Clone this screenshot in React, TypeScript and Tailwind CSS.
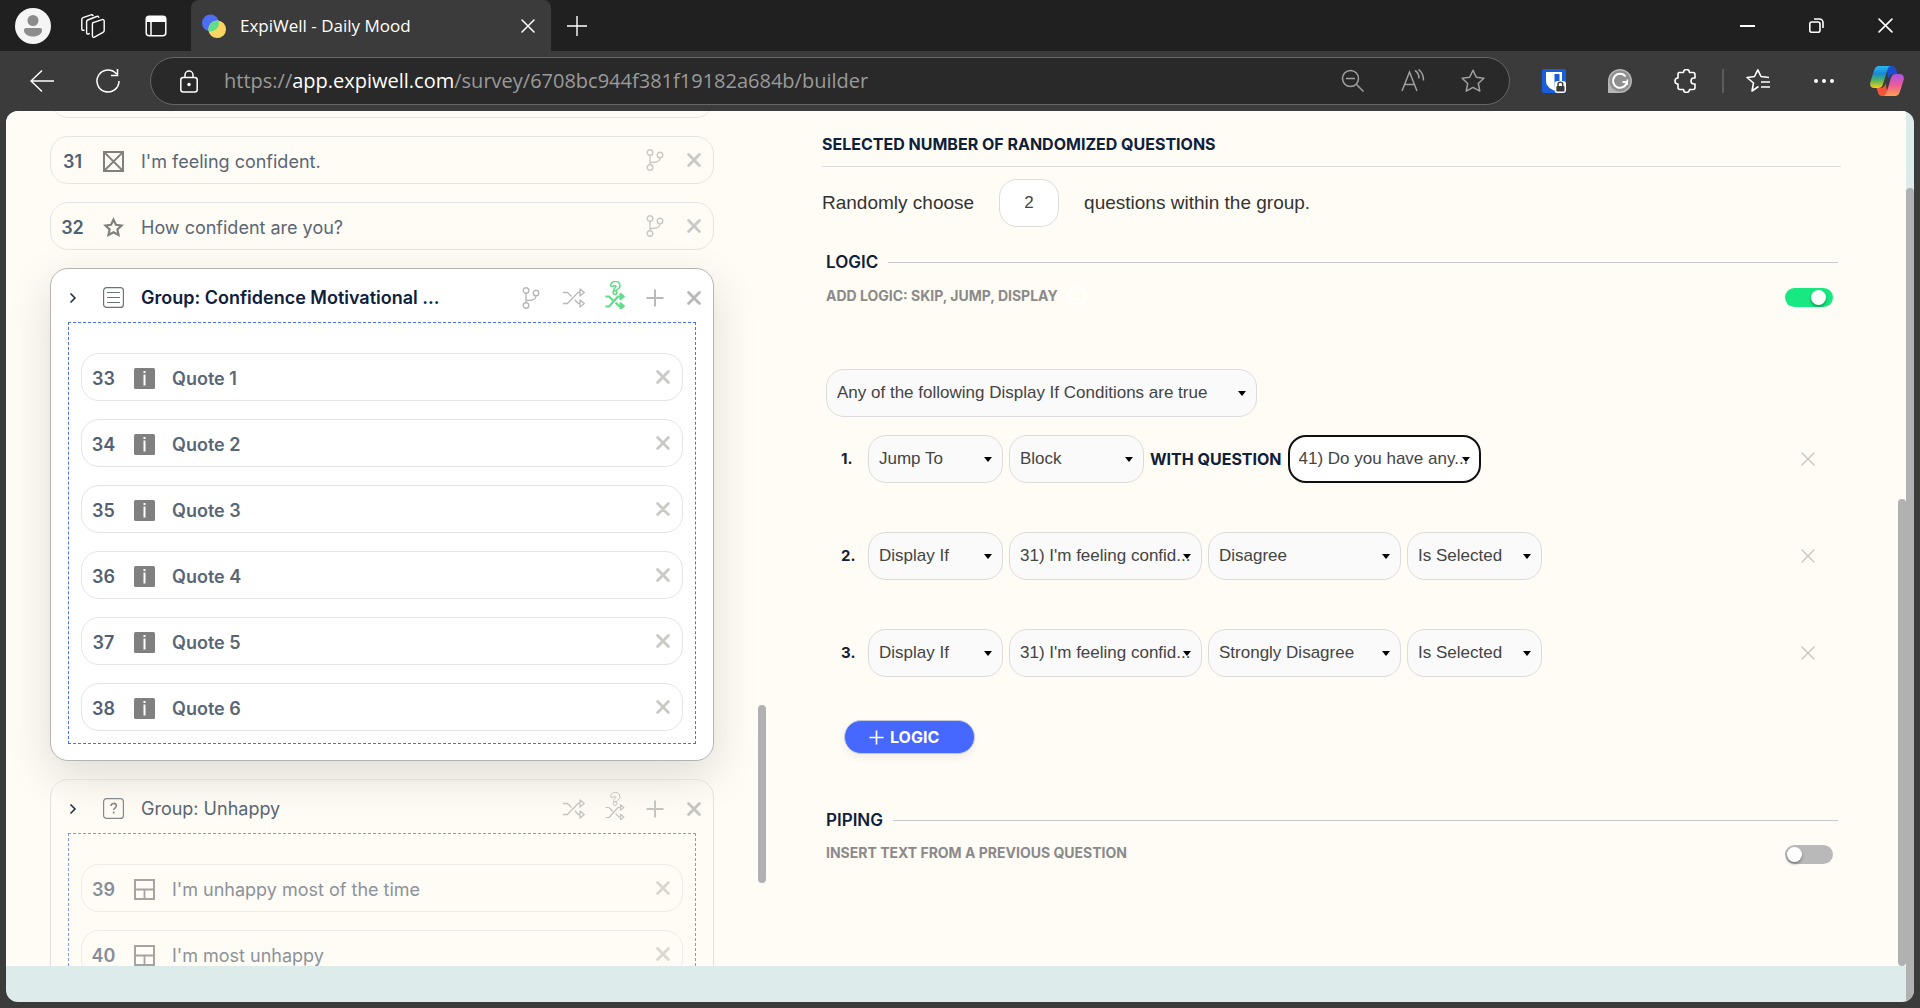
import React, { useState } from 'react';

interface IconProps {
    className?: string;
}

interface Question {
    id: number;
    title: string;
}

interface Condition {
    action: string;
    target: string;
    join?: string;
    answer?: string;
    state?: string;
}

const quotes: Question[] = [
    { id: 33, title: 'Quote 1' },
    { id: 34, title: 'Quote 2' },
    { id: 35, title: 'Quote 3' },
    { id: 36, title: 'Quote 4' },
    { id: 37, title: 'Quote 5' },
    { id: 38, title: 'Quote 6' },
];

const unhappyQuestions: Question[] = [
    { id: 39, title: "I'm unhappy most of the time" },
    { id: 40, title: "I'm most unhappy" },
];

const conditions: Condition[] = [
    { action: 'Jump To', target: 'Block', join: 'WITH QUESTION', answer: '41) Do you have any...' },
    { action: 'Display If', target: "31) I'm feeling confid...", answer: 'Disagree', state: 'Is Selected' },
    { action: 'Display If', target: "31) I'm feeling confid...", answer: 'Strongly Disagree', state: 'Is Selected' },
];

// --- Browser icons ---
const WorkspacesIcon = () => (
    <svg className="w-6 h-6" viewBox="0 0 24 24" fill="none" stroke="#fff" strokeWidth="1.4" strokeLinejoin="round" strokeLinecap="round">
        <path d="M11.5 8.8 21 5.6a1.6 1.6 0 0 1 2.2 1.5v9.4a2 2 0 0 1-1.2 1.8l-8.6 4.9a1.3 1.3 0 0 1-2-1.1V10a1.6 1.6 0 0 1 1-1.5" />
        <path d="M8.2 19.6 7.3 20a1.2 1.2 0 0 1-1.7-1.1V7.6A2 2 0 0 1 6.8 6l8.8-3.5a1.7 1.7 0 0 1 2.2.8" />
        <path d="M3 16.2 2 16.3A1.2 1.2 0 0 1 .8 15V5.4a2 2 0 0 1 1.2-1.8L10 .9a1.6 1.6 0 0 1 2 .6" />
    </svg>
);

const TabActionsIcon = () => (
    <svg className="w-[22px] h-[22px]" viewBox="0 0 22 22" fill="none">
        <rect x="1.2" y="1.2" width="19.6" height="19.6" rx="3" stroke="#fff" strokeWidth="1.5" />
        <path d="M1 4a3 3 0 0 1 3-3h14a3 3 0 0 1 3 3v3H1z" fill="#fff" />
        <path d="M6 7v13.5" stroke="#fff" strokeWidth="1.5" />
    </svg>
);

const Favicon = () => (
    <svg className="w-6 h-6" viewBox="0 0 24 24">
        <defs>
            <clipPath id="fav-blue"><circle cx="8.5" cy="9" r="8.5" /></clipPath>
        </defs>
        <circle cx="8.5" cy="9" r="8.5" fill="#4c6ef5" />
        <circle cx="15.2" cy="15.2" r="8.8" fill="#fcd462" />
        <circle cx="15.2" cy="15.2" r="8.8" fill="#62dc88" clipPath="url(#fav-blue)" />
    </svg>
);

const ThinX = ({ className }: IconProps) => (
    <svg className={className} viewBox="0 0 14 14" fill="none" stroke="currentColor" strokeWidth="1.5" strokeLinecap="round">
        <path d="m1 1 12 12M13 1 1 13" />
    </svg>
);

const BoldX = ({ className }: IconProps) => (
    <svg className={className} viewBox="0 0 14 14" fill="none" stroke="currentColor" strokeWidth="2.8" strokeLinecap="round">
        <path d="m1.6 1.6 10.8 10.8M12.4 1.6 1.6 12.4" />
    </svg>
);

const PlusIcon = ({ className }: IconProps) => (
    <svg className={className} viewBox="0 0 18 18" fill="none" stroke="currentColor" strokeWidth="2">
        <path d="M9 .5v17M.5 9h17" />
    </svg>
);

const BitwardenIcon = () => (
    <svg className="w-6 h-6" viewBox="0 0 24 24">
        <rect width="24" height="24" rx="2" fill="#175ddc" />
        <path d="M4 3h16v9c0 5-4.5 8-8 9.5C8.5 20 4 17 4 12z" fill="#fff" />
        <path d="M12.5 5h5v7c0 2.5-2.5 5-5 6.5z" fill="#175ddc" />
        <rect x="12.5" y="12" width="11.5" height="12" rx="3" fill="#fff" />
        <path d="M16 17v-1.5a2.4 2.4 0 0 1 4.8 0V17" fill="none" stroke="#3b3b3b" strokeWidth="1.4" />
        <rect x="14.3" y="17" width="8.2" height="5.5" rx="1" fill="#3b3b3b" />
    </svg>
);

const GrammarlyIcon = () => (
    <svg className="w-6 h-6" viewBox="0 0 24 24">
        <path d="M12 0a12 12 0 1 1 0 24H0V12A12 12 0 0 1 12 0z" fill="#b5b5b5" />
        <circle cx="12" cy="12" r="10.5" fill="#8f8f8f" />
        <path d="M17.5 7.5a7 7 0 1 0 1.4 5.5h-4.4" fill="none" stroke="#fff" strokeWidth="2" />
        <path d="m19.5 10.5-.4 5.5" stroke="#fff" strokeWidth="1.6" />
    </svg>
);

const CopilotIcon = () => (
    <svg className="w-[34px] h-[30px]" viewBox="0 0 34 30">
        <defs>
            <linearGradient id="cp-a" x1="0" y1="0" x2="0" y2="1">
                <stop offset="0" stopColor="#2bb8f0" />
                <stop offset=".35" stopColor="#1788d8" />
                <stop offset=".65" stopColor="#52b45c" />
                <stop offset="1" stopColor="#f8cf1c" />
            </linearGradient>
            <linearGradient id="cp-b" x1="0" y1="0" x2="0" y2="1">
                <stop offset="0" stopColor="#a855e8" />
                <stop offset=".5" stopColor="#ee5a9a" />
                <stop offset="1" stopColor="#fda34c" />
            </linearGradient>
        </defs>
        <path d="M16 0h6c2.5 0 3.5 1.5 4.2 4l1.3 4h-4c-3 0-4 1.5-5 5z" fill="#1b4fd0" />
        <path d="M18 30h-6c-2.5 0-3.5-1.5-4.2-4L6.5 22h4c3 0 4-1.5 5-5z" fill="#f0553a" />
        <path d="M9 0h12c-2 0-3 1.5-4 5l-4 13c-1 3-2 4-5 4H4.5C1 22-.6 19.5.4 16L4 4.5C5 1.5 6.5 0 9 0z" fill="url(#cp-a)" />
        <path d="M25 30H13c2 0 3-1.5 4-5l4-13c1-3 2-4 5-4h3.5c3.5 0 5.1 2.5 4.1 6L30 25.5c-1 3-2.5 4.5-5 4.5z" fill="url(#cp-b)" />
    </svg>
);

// --- Survey icons ---
const BranchIcon = ({ className }: IconProps) => (
    <svg className={className} viewBox="0 0 18 22" fill="none" stroke="currentColor" strokeWidth="1.4">
        <circle cx="4" cy="3.5" r="2.8" />
        <circle cx="4" cy="18.5" r="2.8" />
        <circle cx="14" cy="6" r="2.8" />
        <path d="M4 6.3v9.4M4 13.8l6-.8c2.5-.4 3.8-1.7 4-4.2" />
    </svg>
);

const ShuffleIcon = ({ className }: IconProps) => (
    <svg className={className} viewBox="0 0 22 20" fill="none" stroke="currentColor" strokeWidth="1.3" strokeLinejoin="round">
        <path d="M0 4.5h4.5l4 4M0 15.5h4.5L15 4.5h1.800M11.800 11.800l3.400 3.700h1.600" />
        <path d="M17 .9 21.300 4.500 17 8.100zM17 11.900l4.300 3.600-4.300 3.600z" />
    </svg>
);

const RandomSomeIcon = ({ className, strong }: IconProps & { strong?: boolean }) => (
    <svg className={className} viewBox="0 0 20 28" fill="none" stroke="currentColor" strokeLinejoin="round">
        <path d="M5.8 5a4.600 4.200 0 1 1 6.900 3.200c-1 .7-1.200.9-1.200 1.500H8.600c0-2.100.8-2.600 1.700-3.200.9-.6.800-2.100-.3-2.100-.9 0-1.300.5-1.500 1.200z" strokeWidth={strong ? 1.5 : 1} />
        <circle cx="10" cy="11.500" r="1.900" strokeWidth={strong ? 1.5 : 1} />
        <g strokeWidth={strong ? 2.2 : 1.2}>
            <path d="M.5 15.500h3.500l4 4M.5 25.500h3.500l9-10h2M10.500 21.500l3.500 3.500h1" />
            <path d="m15.500 12.800 3.300 2.700-3.300 2.700zM15.500 22.300l3.300 2.700-3.300 2.700z" fill={strong ? 'currentColor' : 'none'} />
        </g>
    </svg>
);

const CrossBoxIcon = () => (
    <svg className="w-[21px] h-[21px]" viewBox="0 0 21 21" fill="none" stroke="#80807c" strokeWidth="2">
        <rect x="1" y="1" width="19" height="19" />
        <path d="m2 2 17 17M19 2 2 19" strokeWidth="1.800" />
    </svg>
);

const StarIcon = () => (
    <svg className="w-[21px] h-[21px]" viewBox="0 0 21 21" fill="none" stroke="#80807c" strokeWidth="2.200">
        <path d="m10.500 2.600 2.400 5.200 5.600.7-4.100 3.900 1.100 5.600-5-2.700-5 2.700 1.100-5.600-4.100-3.900 5.600-.7z" />
    </svg>
);

const ListBoxIcon = () => (
    <svg className="w-[21px] h-[21px]" viewBox="0 0 21 21" fill="none" stroke="#6b7280" strokeWidth="1.200">
        <rect x=".6" y=".6" width="19.800" height="19.800" rx="3" />
        <path d="M4 5.500h13M4 10.500h13M4 15.500h13" />
    </svg>
);

const HelpBoxIcon = () => (
    <svg className="w-[21px] h-[21px]" viewBox="0 0 21 21" fill="none" stroke="#85888a" strokeWidth="1.200">
        <rect x=".6" y=".6" width="19.800" height="19.800" rx="3" />
        <path d="M8 8c0-3.400 5.400-3.400 5.400-.2 0 2-2.700 2-2.700 4.200M10.700 13.600v1.800" strokeWidth="1.600" />
    </svg>
);

const InfoIcon = () => (
    <svg className="w-[21px] h-[21px]" viewBox="0 0 21 21">
        <rect width="21" height="21" rx="1.500" fill="#808080" />
        <rect x="9.500" y="3" width="2" height="2" fill="#fff" />
        <rect x="9.500" y="6.500" width="2" height="11" fill="#fff" />
    </svg>
);

const TableIcon = () => (
    <svg className="w-[21px] h-[21px]" viewBox="0 0 21 21" fill="none" stroke="#808080" strokeWidth="2">
        <rect x="1" y="1" width="19" height="19" />
        <path d="M1 10.500h19M10.500 10.500V20" strokeWidth="1.800" />
    </svg>
);

const ChevronIcon = () => (
    <svg className="w-2 h-3" viewBox="0 0 8 12" fill="none" stroke="#1e2b40" strokeWidth="1.500">
        <path d="m1.500 1.500 4.500 4.500-4.500 4.500" />
    </svg>
);

// --- Browser chrome ---
const TitleBar = () => (
    <header className="flex h-[51px] shrink-0 items-center bg-[#202020] text-white">
        <button aria-label="Profile" className="ml-[15px] flex h-9 w-9 items-center justify-center rounded-full bg-[#f5f5f5]">
            <svg className="w-[18px] h-[22px]" viewBox="0 0 18 22" fill="#8c8c8c">
                <circle cx="9" cy="5.500" r="5.500" />
                <path d="M2 13h14a2 2 0 0 1 2 2c0 4-4 6.500-9 6.500S0 19 0 15a2 2 0 0 1 2-2z" />
            </svg>
        </button>
        <button aria-label="Workspaces" className="ml-[30px]"><WorkspacesIcon /></button>
        <button aria-label="Tab actions" className="ml-10"><TabActionsIcon /></button>
        <div className="ml-6 flex h-full w-[360px] items-center rounded-t-lg bg-[#3b3b3b] pl-[11px] pr-4">
            <Favicon />
            <span className="ml-[14px] flex-1 truncate text-[17px]">ExpiWell - Daily Mood</span>
            <button aria-label="Close tab"><ThinX className="w-[14px] h-[14px]" /></button>
        </div>
        <button aria-label="New tab" className="ml-4">
            <svg className="w-5 h-5" viewBox="0 0 20 20" stroke="currentColor" strokeWidth="1.400"><path d="M10 0v20M0 10h20" /></svg>
        </button>
        <div className="ml-auto mr-[27px] flex items-center gap-[54px]">
            <button aria-label="Minimize" className="flex h-4 w-[15px] items-center"><span className="h-0.5 w-full bg-white" /></button>
            <button aria-label="Restore">
                <svg className="w-[15px] h-[15px]" viewBox="0 0 15 15" fill="none" stroke="currentColor" strokeWidth="1.600">
                    <rect x=".8" y="4" width="10.200" height="10.200" rx="2" />
                    <path d="M5 1h5.500A3.500 3.500 0 0 1 14 4.500V10" />
                </svg>
            </button>
            <button aria-label="Close window"><ThinX className="w-[15px] h-[15px]" /></button>
        </div>
    </header>
);

const AddressBar = () => (
    <nav className="flex h-[60px] shrink-0 items-center bg-[#3b3b3b] pl-[30px] pr-4 text-white">
        <button aria-label="Back">
            <svg className="w-6 h-6" viewBox="0 0 24 24" fill="none" stroke="currentColor" strokeWidth="1.500"><path d="M24 12H1M12 1.500 1 12l11 10.500" /></svg>
        </button>
        <button aria-label="Refresh" className="ml-[42px]">
            <svg className="w-6 h-6" viewBox="0 0 24 24" fill="none" stroke="currentColor" strokeWidth="1.500"><path d="M20.500 5A11 11 0 1 0 23 12M21.500 0v6.500h-6.500" /></svg>
        </button>
        <form className="ml-[30px] flex h-12 flex-1 items-center rounded-full border border-[#666] bg-[#292929] pl-[29px] pr-6">
            <svg className="w-[18px] h-[23px]" viewBox="0 0 18 23" fill="none" stroke="currentColor" strokeWidth="1.500">
                <rect x=".8" y="7.500" width="16.400" height="14.500" rx="2.500" />
                <path d="M5 7.500V5a4 4 0 0 1 8 0v2.500" />
                <circle cx="9" cy="14.500" r="1" fill="currentColor" />
            </svg>
            <span className="ml-[26px] flex-1 truncate text-[20px] text-[#9a9a9a]">
                https://<span className="text-white">app.expiwell.com</span>/survey/6708bc944f381f19182a684b/builder
            </span>
            <div className="flex items-center gap-9 text-[#a0a0a0]">
                <button type="button" aria-label="Zoom out">
                    <svg className="w-6 h-6" viewBox="0 0 24 24" fill="none" stroke="currentColor" strokeWidth="1.500"><circle cx="9.500" cy="9.500" r="8" /><path d="m15.500 15.500 7 7M5 9.500h9" /></svg>
                </button>
                <button type="button" aria-label="Read aloud">
                    <svg className="w-6 h-6" viewBox="0 0 24 24" fill="none" stroke="currentColor" strokeWidth="1.500"><path d="M1 22 8.500 3 16 22M3.500 15.500h10M14 1.500c2.500 1.500 4 4.500 4 8M17.500.5c3.500 2.500 5 6 5 11" /></svg>
                </button>
                <button type="button" aria-label="Add to favorites">
                    <svg className="w-6 h-6" viewBox="0 0 24 24" fill="none" stroke="currentColor" strokeWidth="1.500" strokeLinejoin="round"><path d="m12 1.200 3.300 7 7.600 1-5.600 5.300 1.500 7.600-6.800-3.700-6.800 3.700 1.500-7.600L1.100 9.200l7.600-1z" /></svg>
                </button>
            </div>
        </form>
        <div className="ml-8 flex items-center">
            <button aria-label="Bitwarden"><BitwardenIcon /></button>
            <button aria-label="Grammarly" className="ml-[42px]"><GrammarlyIcon /></button>
            <button aria-label="Extensions" className="ml-[42px]">
                <svg className="w-6 h-6" viewBox="0 0 24 24" fill="none" stroke="currentColor" strokeWidth="1.600" strokeLinejoin="round"><path d="M5 3.500h4.500a3 3 0 0 1 6 0H19a2 2 0 0 1 2 2V9h-1a3 3 0 0 0 0 6h1v3.500a2 2 0 0 1-2 2h-3.500a3 3 0 0 1-6 0H6a2 2 0 0 1-2-2V15a3 3 0 0 1 0-6V5.500a2 2 0 0 1 1-2z" /></svg>
            </button>
            <span className="ml-6 h-6 w-0.5 bg-[#5c5c5c]" />
            <button aria-label="Favorites" className="ml-[22px]">
                <svg className="w-6 h-6" viewBox="0 0 24 24" fill="none" stroke="currentColor" strokeWidth="1.600" strokeLinejoin="round"><path d="M12.500 17.500 6 22l1.500-8L1 8.500l7.500-1L11.800.8l3.200 6.700 8 1M15 13h9M15 18h9" /></svg>
            </button>
            <button aria-label="More" className="ml-11 flex gap-1">
                <span className="h-1 w-1 rounded-full bg-white" />
                <span className="h-1 w-1 rounded-full bg-white" />
                <span className="h-1 w-1 rounded-full bg-white" />
            </button>
            <button aria-label="Copilot" className="ml-9"><CopilotIcon /></button>
        </div>
    </nav>
);

// --- Question list ---
interface QuestionCardProps {
    question: Question;
    icon: React.ReactNode;
    bold?: boolean;
    branch?: boolean;
    className?: string;
}

const QuestionCard: React.FC<QuestionCardProps> = ({ question, icon, bold, branch, className = '' }) => (
    <li className={`flex h-12 items-center rounded-[18px] border border-[#e4e4e4] pr-3 ${className}`}>
        <div className="flex min-w-0 flex-1 items-center pt-0.5">
            <span className="w-[43px] text-center text-[18px] font-semibold text-[#526074]">{question.id}</span>
            <span className="ml-[9px]">{icon}</span>
            <span className={`ml-[17px] truncate text-[18px] text-[#5a6675] ${bold ? 'font-semibold' : ''}`}>{question.title}</span>
        </div>
        <span className="flex items-center gap-[23px] text-[#c9c9c6]">
            {branch && <button aria-label="Add branch"><BranchIcon className="w-[18px] h-[22px]" /></button>}
            <button aria-label={`Remove question ${question.id}`}><BoldX className="w-[14px] h-[14px]" /></button>
        </span>
    </li>
);

interface GroupCardProps {
    title: string;
    icon: React.ReactNode;
    selected?: boolean;
    children: React.ReactNode;
}

const GroupCard: React.FC<GroupCardProps> = ({ title, icon, selected, children }) => (
    <li className={`rounded-[18px] border px-[17px] pb-4 ${selected ? 'border-[#b4b4b4] bg-white shadow-[0_15px_45px_rgba(0,0,0,0.13)]' : 'border-[#e0e0de]'}`}>
        <div className="-mx-[17px] flex h-[53px] items-center pr-3 pt-1">
            <button aria-label="Expand group" className="flex w-[43px] justify-center"><ChevronIcon /></button>
            <span className="ml-[9px]">{icon}</span>
            <h3 className={`ml-[17px] min-w-0 flex-1 truncate text-[18px] ${selected ? 'font-semibold text-[#0e203a]' : 'text-[#5a6675]'}`}>{title}</h3>
            <div className={`flex items-center ${selected ? 'text-[#b8b8b8]' : 'text-[#c4c4c0]'}`}>
                {selected && <button aria-label="Add branch" className="mr-[23px]"><BranchIcon className="w-[18px] h-[22px]" /></button>}
                <button aria-label="Randomize"><ShuffleIcon className="w-[22px] h-5" /></button>
                <button aria-label="Randomize some" className={`-mt-[6px] ml-5 ${selected ? 'text-[#62dc88]' : ''}`}>
                    <RandomSomeIcon className="w-5 h-7" strong={selected} />
                </button>
                <button aria-label="Add question" className="ml-[21px]"><PlusIcon className="w-[18px] h-[18px]" /></button>
                <button aria-label="Remove group" className="ml-[23px]"><BoldX className="w-[14px] h-[14px]" /></button>
            </div>
        </div>
        <ul className={`space-y-[18px] border border-dashed px-3 pb-3 pt-[30px] ${selected ? 'border-[#4c6ef5]' : 'border-[#8298f0]'}`}>
            {children}
        </ul>
    </li>
);

const QuestionList = () => (
    <section className="relative min-h-0 overflow-hidden">
        <ul className="-mt-[41px] ml-11 mr-[52px] space-y-[18px]">
            <li className="h-12 rounded-[18px] border border-[#e4e4e4]" />
            <QuestionCard question={{ id: 31, title: "I'm feeling confident." }} icon={<CrossBoxIcon />} branch />
            <QuestionCard question={{ id: 32, title: 'How confident are you?' }} icon={<StarIcon />} branch />
            <GroupCard title="Group: Confidence Motivational ..." icon={<ListBoxIcon />} selected>
                {quotes.map(q => <QuestionCard key={q.id} question={q} icon={<InfoIcon />} bold />)}
            </GroupCard>
            <GroupCard title="Group: Unhappy" icon={<HelpBoxIcon />}>
                {unhappyQuestions.map(q => <QuestionCard key={q.id} question={q} icon={<TableIcon />} className="opacity-70" />)}
            </GroupCard>
        </ul>
        <div className="absolute right-0 top-[594px] h-[178px] w-2 rounded-full bg-[#b1b1b3]" />
    </section>
);

// --- Settings panel ---
interface DropdownProps {
    label: string;
    value: string;
    className: string;
    focused?: boolean;
}

const Dropdown: React.FC<DropdownProps> = ({ label, value, className, focused }) => (
    <div className={`relative ${className}`}>
        <select
            aria-label={label}
            defaultValue={value}
            className={`h-12 w-full appearance-none rounded-[18px] pr-1 font-['Liberation_Sans',Arial,sans-serif] text-[17px] text-[#444] outline-none ${focused ? 'border-2 border-[#101010] bg-white pl-[9px]' : 'border border-[#dcdcdc] bg-[#fafafa] pl-2.5'}`}
        >
            <option>{value}</option>
        </select>
        <svg className="pointer-events-none absolute right-[11px] top-[22px] h-[5px] w-2" viewBox="0 0 8 5"><path d="M0 0h8L4 5z" fill="#000" /></svg>
    </div>
);

const SectionTitle = ({ children }: { children: string }) => (
    <div className="flex items-center gap-[10px] pr-[3px]">
        <h2 className="text-[17px] leading-6 font-semibold text-[#0e203a]">{children}</h2>
        <span className="h-px flex-1 bg-[#c8cacd]" />
    </div>
);

const Toggle = ({ label, initial }: { label: string; initial: boolean }) => {
    const [on, setOn] = useState(initial);
    return (
        <input
            type="checkbox"
            role="switch"
            aria-label={label}
            checked={on}
            onChange={() => setOn(!on)}
            className="flex h-[19px] w-12 appearance-none items-center rounded-full bg-[#b9b9b9] pl-0.5 before:block before:h-[15px] before:w-[15px] before:rounded-full before:bg-white before:shadow-[0_2px_3px_rgba(0,0,0,0.35)] checked:bg-[#17e881] checked:pl-[26px]"
        />
    );
};

const ConditionRow = ({ condition, index }: { condition: Condition; index: number }) => (
    <li className="flex h-12 items-center">
        <span className="w-[42px] pl-[15px] text-[15px] font-bold text-[#0e203a]">{index + 1}.</span>
        <div className="flex items-center gap-[6px]">
            <Dropdown label="Action" value={condition.action} className="w-[135px]" />
            <Dropdown label="Target" value={condition.target} className={condition.join ? 'w-[135px]' : 'w-[193px]'} />
            {condition.join && <span className="text-[16px] font-bold text-[#0e203a]">{condition.join}</span>}
            {condition.answer && <Dropdown label="Answer" value={condition.answer} className="w-[193px]" focused={!!condition.join} />}
            {condition.state && <Dropdown label="State" value={condition.state} className="w-[135px]" />}
        </div>
        <button aria-label="Remove condition" className="ml-auto mr-[26px] text-[#c9c9c6]"><ThinX className="w-[14px] h-[14px]" /></button>
    </li>
);

const SettingsPanel = () => (
    <section className="relative min-h-0 overflow-hidden pl-14 pr-[65px]">
        <h2 className="border-b border-[#dcdcdc] pb-[10px] pt-[21px] text-[16px] leading-6 font-bold text-[#0e203a]">
            SELECTED NUMBER OF RANDOMIZED QUESTIONS
        </h2>
        <label className="mt-3 flex items-center gap-[25px] font-['Liberation_Sans',Arial,sans-serif] text-[19px] text-[#333]">
            Randomly choose
            <input defaultValue="2" className="h-12 w-[60px] rounded-[18px] border border-[#dcdcdc] bg-white text-center text-[17px] text-[#444] outline-none" />
            questions within the group.
        </label>
        <div className="mt-[23px] pl-1">
            <SectionTitle>LOGIC</SectionTitle>
            <div className="mt-[9px] flex h-6 items-center pr-2">
                <h3 className="text-[14px] font-bold text-[#8a8a8a]">ADD LOGIC: SKIP, JUMP, DISPLAY</h3>
                <button aria-label="Help" className="ml-[10px] flex h-[19px] w-[19px] items-center justify-center rounded-full border-2 border-white text-[13px] font-bold text-white">?</button>
                <span className="ml-auto self-end"><Toggle label="Logic" initial={true} /></span>
            </div>
            <Dropdown label="Condition mode" value="Any of the following Display If Conditions are true" className="mt-[62px] w-[431px]" />
            <ol className="mt-[18px] space-y-[49px]">
                {conditions.map((c, i) => <ConditionRow key={i} condition={c} index={i} />)}
            </ol>
            <button className="ml-[18px] mt-[43px] flex h-[34px] w-[131px] items-center gap-[6px] rounded-full border border-[#c5c9d8] bg-[#4668ff] pl-6 text-[16px] font-bold text-white shadow-[0_4px_10px_rgba(0,0,0,0.06)]">
                <PlusIcon className="w-[15px] h-[15px]" />
                LOGIC
            </button>
            <div className="mt-[54px]">
                <SectionTitle>PIPING</SectionTitle>
                <div className="mt-2 flex h-6 items-center pr-2">
                    <h3 className="text-[14px] font-bold text-[#8a8a8a]">INSERT TEXT FROM A PREVIOUS QUESTION</h3>
                    <span className="ml-auto self-end"><Toggle label="Piping" initial={false} /></span>
                </div>
            </div>
        </div>
        <div className="absolute bottom-0 right-0 h-[467px] w-2 rounded-full bg-[#b1b1b1]" />
    </section>
);

export default function App() {
    return (
        <div className="flex h-screen flex-col overflow-hidden bg-[#3b3b3b] font-['Open_Sans','Noto_Sans',sans-serif]">
            <TitleBar />
            <AddressBar />
            <div className="mx-1.5 mb-1.5 flex min-h-0 flex-1 overflow-hidden rounded-xl bg-[#deebeb] font-['Inter',sans-serif]">
                <main className="mb-9 grid min-w-0 flex-1 grid-cols-[2fr_3fr] grid-rows-[minmax(0,1fr)] bg-[#fffcf5]">
                    <QuestionList />
                    <SettingsPanel />
                </main>
                <div className="w-2 pt-[77px]">
                    <div className="h-full rounded-t-full bg-[#b1b1b1]" />
                </div>
            </div>
        </div>
    );
}
